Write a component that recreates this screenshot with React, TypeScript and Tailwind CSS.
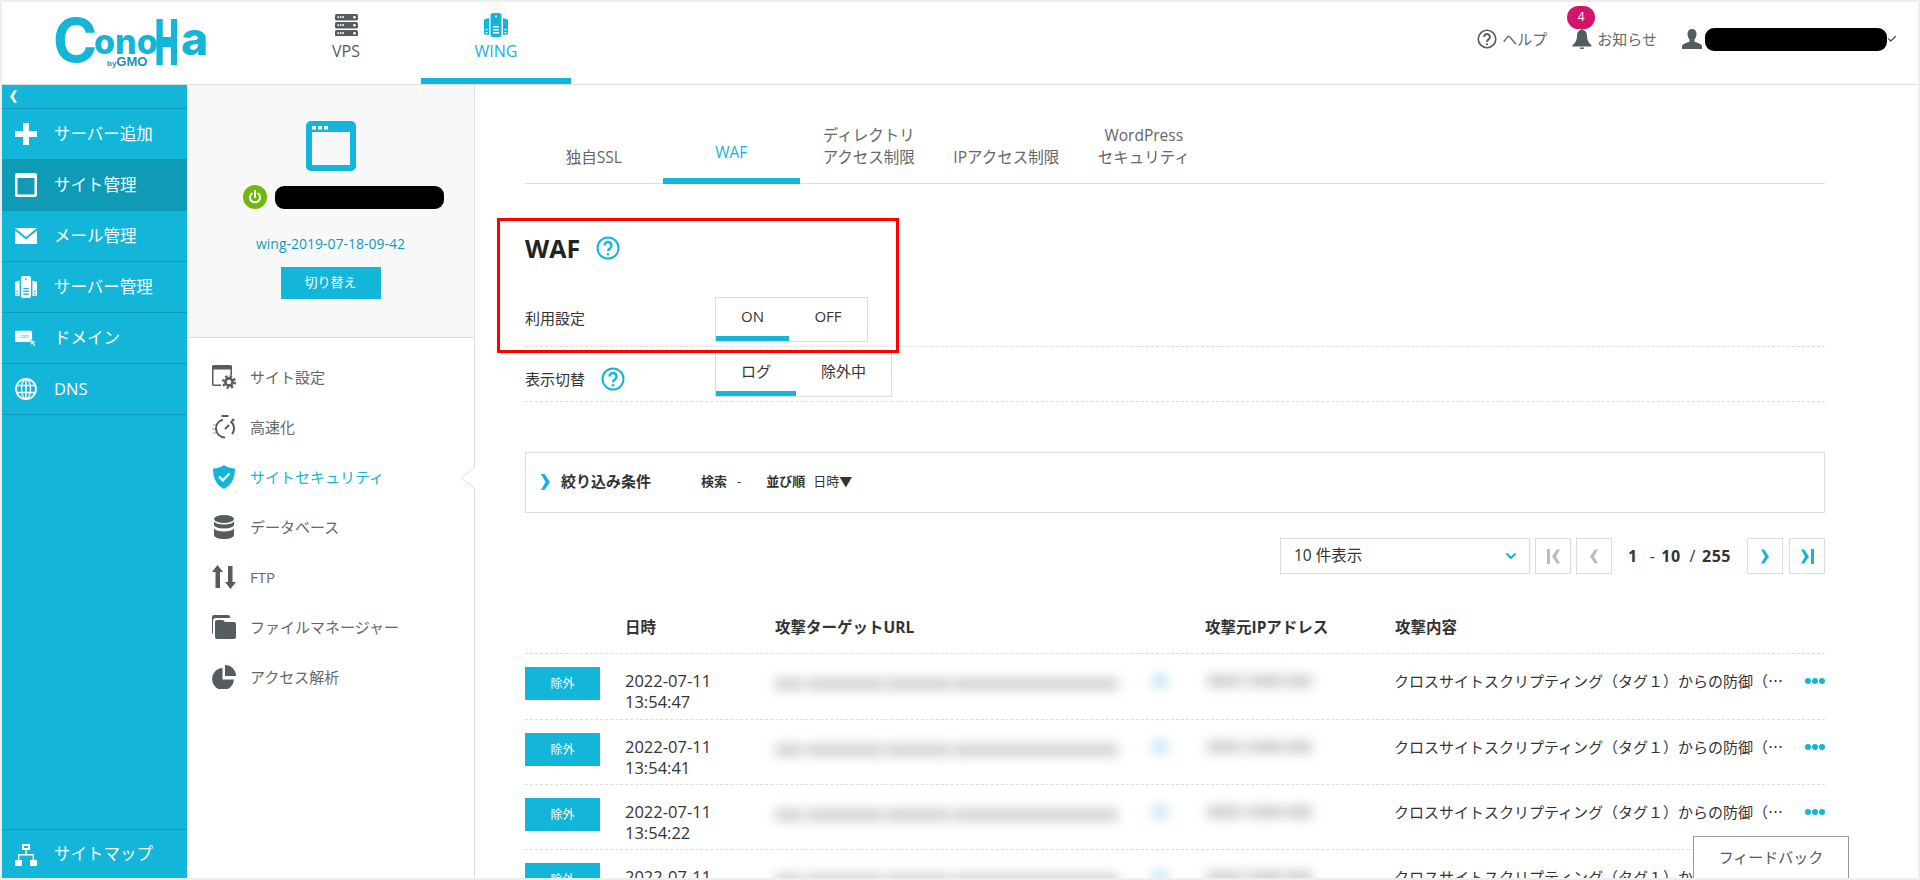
import { ChevronDown, Check } from "lucide-react"
import type { ReactNode } from "react"

const font = "font-['Open_Sans','Noto_Sans_CJK_JP',sans-serif]"

/* ---------- icons ---------- */

function WindowIcon({ className }: { className?: string }) {
  return (
    <svg viewBox="0 0 50 50" className={className} fill="currentColor">
      <path fillRule="evenodd" d="M5 0h40a5 5 0 0 1 5 5v40a5 5 0 0 1-5 5H5a5 5 0 0 1-5-5V5a5 5 0 0 1 5-5zM6 11v33h38V11z" />
      <rect x="6" y="5" width="4" height="3.5" fill="#fff" />
      <rect x="12" y="5" width="4" height="3.5" fill="#fff" />
      <rect x="18" y="5" width="4" height="3.5" fill="#fff" />
    </svg>
  )
}

function ServerIcon({ className }: { className?: string }) {
  return (
    <svg viewBox="0 0 23 22" className={className} fill="currentColor">
      {[0, 8, 16].map((y) => (
        <g key={y}>
          <rect x="0" y={y} width="23" height="6.5" rx="1.5" />
          <rect x="2.5" y={y + 2.2} width="1.5" height="1.8" fill="#fff" />
          <rect x="5" y={y + 2.2} width="1.5" height="1.8" fill="#fff" />
          <rect x="7.5" y={y + 2.2} width="1.5" height="1.8" fill="#fff" />
          <circle cx="19.5" cy={y + 3.2} r="1.3" fill="#fff" />
        </g>
      ))}
    </svg>
  )
}

// same drawing in the header (white details) and the sidebar (teal details)
function WingIcon({ className, detail }: { className?: string; detail: string }) {
  return (
    <svg viewBox="0 0 24 24" className={className} fill="currentColor">
      <path d="M0 6.5 5 5v17l-4-.5A1 1 0 0 1 0 20.5z" />
      <path d="M24 6.5 19 5v17l4-.5a1 1 0 0 0 1-1z" />
      <rect x="6.5" y="0" width="11" height="24" rx="2.5" />
      <rect x="9" y="13" width="6" height="1.5" fill={detail} />
      <rect x="9" y="16" width="6" height="1.5" fill={detail} />
      <rect x="9" y="19" width="6" height="1.5" fill={detail} />
      <circle cx="12" cy="3.5" r="1" fill={detail} />
      <rect x="1.5" y="16" width="2" height="1.2" fill={detail} />
      <rect x="1.5" y="19" width="2" height="1.2" fill={detail} />
      <rect x="20.5" y="16" width="2" height="1.2" fill={detail} />
      <rect x="20.5" y="19" width="2" height="1.2" fill={detail} />
    </svg>
  )
}

function PlusIcon({ className }: { className?: string }) {
  return (
    <svg viewBox="0 0 22 22" className={className} fill="currentColor">
      <path d="M8 0h6v8h8v6h-8v8H8v-8H0V8h8z" />
    </svg>
  )
}

function SmallWindowIcon({ className }: { className?: string }) {
  return (
    <svg viewBox="0 0 22 24" className={className} fill="currentColor">
      <path fillRule="evenodd" d="M2 0h18a2 2 0 0 1 2 2v20a2 2 0 0 1-2 2H2a2 2 0 0 1-2-2V2a2 2 0 0 1 2-2zM2.500 5v16.500h17V5z" />
    </svg>
  )
}

function MailIcon({ className }: { className?: string }) {
  return (
    <svg viewBox="0 0 22 16" className={className} fill="currentColor">
      <path d="M0 0h22L11 9z" />
      <path d="M0 2.500l11 9 11-9V16H0z" />
    </svg>
  )
}

function GlobeIcon({ className }: { className?: string }) {
  return (
    <svg viewBox="0 0 22 22" className={className} fill="none" stroke="currentColor" strokeWidth="1.400">
      <circle cx="11" cy="11" r="10" strokeWidth="1.800" />
      <ellipse cx="11" cy="11" rx="4.500" ry="10" />
      <path d="M11 1v20M1.500 7.500h19M1.500 14.500h19" />
    </svg>
  )
}

function DomainIcon({ className }: { className?: string }) {
  return (
    <svg viewBox="0 0 27 20" className={className}>
      <rect x="0" y="1" width="21" height="14" rx="1" fill="#fff" />
      <path d="M19 12l7 3-3 1 2 3-1.500 1-2-3-2 2z" fill="#fff" stroke="#13b5d8" strokeWidth="0.6" />
      <text x="10.500" y="10.500" fontSize="6" textAnchor="middle" fill="#13b5d8" fontFamily="Open Sans">.com</text>
    </svg>
  )
}

function SitemapIcon({ className }: { className?: string }) {
  return (
    <svg viewBox="0 0 22 22" className={className} fill="#fff">
      <path fillRule="evenodd" d="M7 0h8v6H7zM9 2v2h4V2z" />
      <path d="M10.300 6h1.400v4H19v6h-1.400v-4.600H4.400V16H3v-6h7.300z" />
      <rect x="0" y="16" width="7" height="6" />
      <rect x="15" y="16" width="7" height="6" />
    </svg>
  )
}

function HelpIcon({ className, width = 2 }: { className?: string; width?: number }) {
  return (
    <svg viewBox="0 0 24 24" className={className} fill="none" stroke="currentColor" strokeWidth={width}>
      <circle cx="12" cy="12" r="10.500" />
      <path d="M8.500 9.500a3.500 3.500 0 1 1 5.600 2.800c-1.300 1-2.100 1.500-2.100 3" strokeWidth="2.400" />
      <circle cx="12" cy="18.300" r="1.300" fill="currentColor" stroke="none" />
    </svg>
  )
}

function BellIcon({ className }: { className?: string }) {
  return (
    <svg viewBox="0 0 20 20" className={className} fill="currentColor">
      <circle cx="10" cy="1.500" r="1.500" />
      <path d="M10 1c3.500 0 5 2.500 5 6 0 4 1.500 6.500 4.500 9.500v1H.5v-1C3.500 13.500 5 11 5 7c0-3.500 1.500-6 5-6z" />
      <path d="M8 18.500h4a2 2 0 0 1-4 0z" />
    </svg>
  )
}

function UserIcon({ className }: { className?: string }) {
  return (
    <svg viewBox="0 0 20 20" className={className} fill="currentColor">
      <path d="M10 0c3 0 4.500 2 4.500 5 0 2.500-1 4.500-2 5.500v2c1 1 7.500 2 7.500 5V20H0v-2.500c0-3 6.500-4 7.500-5v-2C6.500 9.500 5.500 7.500 5.500 5 5.500 2 7 0 10 0z" />
    </svg>
  )
}

function PowerIcon() {
  return (
    <div className="flex h-6 w-6 items-center justify-center rounded-full bg-[#6cb80e]">
      <svg viewBox="0 0 16 16" className="h-4 w-4" fill="none" stroke="#fff" strokeWidth="2" strokeLinecap="round">
        <path d="M8 2v6" />
        <path d="M4.800 4.500a5 5 0 1 0 6.400 0" />
      </svg>
    </div>
  )
}

function SiteSettingIcon() {
  return (
    <svg viewBox="0 0 24 24" className="h-6 w-6" fill="none">
      <path fillRule="evenodd" fill="#555c60" d="M1.500 0h17A1.500 1.500 0 0 1 20 1.500V10h-1.500V4.500h-17v15H9V21H1.500A1.500 1.500 0 0 1 0 19.500v-18A1.500 1.500 0 0 1 1.500 0z" />
      <circle cx="17" cy="17" r="5.800" stroke="#555c60" strokeWidth="2.400" strokeDasharray="2.300 2.250" />
      <circle cx="17" cy="17" r="3.600" stroke="#555c60" strokeWidth="2.600" />
    </svg>
  )
}

function SpeedIcon() {
  return (
    <svg viewBox="0 0 24 24" className="h-6 w-6" fill="none" stroke="#555c60">
      <rect x="9.500" y="0" width="7" height="2" fill="#555c60" stroke="none" />
      <circle cx="13" cy="13.500" r="9" strokeWidth="2" strokeDasharray="26 8" strokeDashoffset="-14" />
      <path d="M13 14l4-4" strokeWidth="2" />
      <circle cx="21" cy="5" r="1.500" fill="#555c60" stroke="none" />
      <path d="M1 10h3M0 14h3M1 18h3" stroke="#bbb" strokeWidth="1.500" />
    </svg>
  )
}

function ShieldIcon() {
  return (
    <svg viewBox="0 0 24 24" className="h-6 w-6">
      <path d="M12 0c3 2 6.500 3.500 11 3.500C23 13 20 20 12 24 4 20 1 13 1 3.500 5.500 3.500 9 2 12 0z" fill="#13b5d8" />
      <path d="M7 11.500l3.800 3.800L17.500 8.500" fill="none" stroke="#fff" strokeWidth="2.400" />
    </svg>
  )
}

function DatabaseIcon() {
  return (
    <svg viewBox="0 0 24 24" className="h-6 w-6" fill="#555c60">
      <ellipse cx="12" cy="4" rx="10" ry="4" />
      <path d="M2 6.500c1.500 2 5 3 10 3s8.500-1 10-3v4c-1.500 2-5 3-10 3s-8.500-1-10-3z" />
      <path d="M2 13.500c1.500 2 5 3 10 3s8.500-1 10-3V20c0 2.500-4.500 4-10 4S2 22.500 2 20z" />
    </svg>
  )
}

function TransferIcon() {
  return (
    <svg viewBox="0 0 24 24" className="h-6 w-6" fill="#555c60">
      <path d="M5.500 0 11 7H8v16H3.500V7H0z" />
      <path d="M18.500 24 24 17h-3.500V1H16v16h-3z" />
    </svg>
  )
}

function FolderIcon() {
  return (
    <svg viewBox="0 0 24 24" className="h-6 w-6" fill="#555c60">
      <path d="M2 0h14a2 2 0 0 1 2 2v1H4a3 3 0 0 0-3 3v13a2 2 0 0 1-1-2V2a2 2 0 0 1 2-2z" />
      <path d="M5 5h6l2 2h9a2 2 0 0 1 2 2v13a2 2 0 0 1-2 2H5a2 2 0 0 1-2-2V7a2 2 0 0 1 2-2z" />
    </svg>
  )
}

function PieIcon() {
  return (
    <svg viewBox="0 0 24 24" className="h-6 w-6" fill="#555c60">
      <path d="M10.500 3v11.500H22A11 11 0 1 1 10.500 3z" />
      <path d="M13 0a11 11 0 0 1 11 11H13z" />
    </svg>
  )
}

function Chevron({ dir = "right", className }: { dir?: "left" | "right"; className?: string }) {
  return (
    <svg viewBox="0 0 9 16" className={className} fill="currentColor">
      {dir === "right" ? <path d="M0 0h3.500L9 8l-5.500 8H0l4.500-8z" /> : <path d="M9 0H5.500L0 8l5.500 8H9L4.500 8z" />}
    </svg>
  )
}

/* ---------- data ---------- */

const sideItems: { label: string; icon: ReactNode; active?: boolean }[] = [
  { label: "サーバー追加", icon: <PlusIcon className="h-[22px] w-[22px]" /> },
  { label: "サイト管理", icon: <SmallWindowIcon className="h-[24px] w-[22px]" />, active: true },
  { label: "メール管理", icon: <MailIcon className="h-[16px] w-[22px]" /> },
  { label: "サーバー管理", icon: <WingIcon className="h-[22px] w-[22px]" detail="#13b5d8" /> },
  { label: "ドメイン", icon: <DomainIcon className="h-[20px] w-[27px] max-w-none" /> },
  { label: "DNS", icon: <GlobeIcon className="h-[22px] w-[22px]" /> },
]

const siteMenu: { label: string; icon: ReactNode; active?: boolean }[] = [
  { label: "サイト設定", icon: <SiteSettingIcon /> },
  { label: "高速化", icon: <SpeedIcon /> },
  { label: "サイトセキュリティ", icon: <ShieldIcon />, active: true },
  { label: "データベース", icon: <DatabaseIcon /> },
  { label: "FTP", icon: <TransferIcon /> },
  { label: "ファイルマネージャー", icon: <FolderIcon /> },
  { label: "アクセス解析", icon: <PieIcon /> },
]

const tabs = [
  { lines: ["独自SSL"] },
  { lines: ["WAF"], active: true },
  { lines: ["ディレクトリ", "アクセス制限"] },
  { lines: ["IPアクセス制限"] },
  { lines: ["WordPress", "セキュリティ"] },
]

const rows = [
  { date: "2022-07-11", time: "13:54:47", h: "h-[66px]" },
  { date: "2022-07-11", time: "13:54:41", h: "h-[65px]" },
  { date: "2022-07-11", time: "13:54:22", h: "h-[65px]" },
  { date: "2022-07-11", time: "13:54:18", h: "h-[65px]" },
]

/* ---------- parts ---------- */

function Logo() {
  return (
    <div className="relative ml-[53px] w-[216px] font-['Inter',sans-serif] font-extrabold text-[#13b5d8]">
      <span className="absolute left-[-2px] top-[8px] text-[60px] font-bold leading-[60px]">C</span>
      <span className="absolute left-[39px] top-[23px] text-[34px] leading-[34px]">ono</span>
      <span className="absolute left-[100px] top-[9px] origin-left scale-x-[0.5] text-[63px] font-black leading-[63px]">H</span>
      <span className="absolute left-[126px] top-[13px] text-[46px] leading-[46px]">a</span>
      <span className="absolute left-[52px] top-[55px] font-['Liberation_Sans',sans-serif] text-[13px] font-bold leading-[10px] text-[#1c8fb8]">
        <span className="text-[8px]">by</span>GMO
      </span>
    </div>
  )
}

function Header() {
  return (
    <header className="flex h-[83px] shrink-0 items-stretch border-b border-[#ddd] bg-white">
      <Logo />
      <nav className="flex">
        <div className="flex w-[150px] flex-col items-center pt-3 text-[#555c60]">
          <ServerIcon className="h-[22px] w-[23px]" />
          <span className={`${font} mt-[3px] text-[16px]`}>VPS</span>
        </div>
        <div className="flex w-[150px] flex-col items-center border-b-[6px] border-[#13b5d8] pt-[11px] text-[#13b5d8]">
          <WingIcon className="h-[24px] w-[24px]" detail="#fff" />
          <span className={`${font} mt-[2px] text-[16px]`}>WING</span>
        </div>
      </nav>
      <div className={`${font} ml-auto flex items-center pb-[8px] pr-[21px] text-[15px] text-[#666]`}>
        <HelpIcon className="h-5 w-5 text-[#555c60]" />
        <span className="ml-[5px]">ヘルプ</span>
        <div className="relative ml-[25px] flex items-center">
          <span className="absolute left-[-5px] top-[-22px] flex h-[23px] w-[28px] items-center justify-center rounded-full bg-[#d3156a] text-[12px] text-white">
            4
          </span>
          <BellIcon className="h-5 w-5 text-[#555c60]" />
          <span className="ml-[5px]">お知らせ</span>
        </div>
        <UserIcon className="ml-[25px] h-5 w-5 text-[#555c60]" />
        <div className="ml-[3px] h-[23px] w-[182px] rounded-[9px] bg-black" />
        <Check className="h-2.5 w-2.5 text-[#444]" strokeWidth={3} />
      </div>
    </header>
  )
}

function Sidebar() {
  return (
    <aside className={`${font} flex w-[185px] shrink-0 flex-col bg-[#13b5d8] text-white`}>
      <div className="flex h-6 items-center border-b border-[#0f9ab8] pl-2">
        <Chevron dir="left" className="h-[13px] w-[7px]" />
      </div>
      {sideItems.map((item) => (
        <div
          key={item.label}
          className={`flex h-[51px] items-center border-b border-[#0f9ab8] pl-[13px] text-[16.5px] ${item.active ? "bg-[#0f9ab5]" : ""}`}
        >
          <span className="flex w-[22px] justify-start">{item.icon}</span>
          <span className="ml-[17px]">{item.label}</span>
        </div>
      ))}
      <div className="mt-auto flex h-[49px] items-center border-t border-[#0f9ab8] pl-[13px] pt-px text-[16.5px]">
        <span className="flex w-[22px] justify-start">
          <SitemapIcon className="h-[22px] w-[22px]" />
        </span>
        <span className="ml-[17px]">サイトマップ</span>
      </div>
    </aside>
  )
}

function SitePanel() {
  return (
    <aside className={`${font} relative flex w-[288px] shrink-0 flex-col border-r border-[#ddd] bg-white`}>
      <div className="flex h-[253px] flex-col items-center border-b border-[#ddd] bg-[#f8f8f8] pt-[36px]">
        <WindowIcon className="h-[50px] w-[50px] text-[#13b5d8]" />
        <div className="ml-[25px] mt-[14px] flex items-center gap-2">
          <PowerIcon />
          <div className="h-[23px] w-[169px] rounded-[9px] bg-black" />
        </div>
        <p className="mt-[25px] text-[14px] leading-5 text-[#129ab8]">wing-2019-07-18-09-42</p>
        <button className="mt-[13px] h-8 w-[100px] bg-[#13b5d8] text-[13px] text-white">切り替え</button>
      </div>
      <ul className="pt-[14px]">
        {siteMenu.map((item) => (
          <li
            key={item.label}
            className={`flex h-[50px] items-center pl-[25px] text-[15px] ${item.active ? "text-[#13b5d8]" : "text-[#666]"}`}
          >
            {item.icon}
            <span className="ml-[14px]">{item.label}</span>
          </li>
        ))}
      </ul>
      {/* notch pointing at the active item */}
      <svg viewBox="0 0 15 22" className="absolute right-[-1px] top-[382px] h-[22px] w-[15px]">
        <path d="M15 0 1 11l14 11" fill="#fff" stroke="#ddd" />
      </svg>
    </aside>
  )
}

function Segment({ items, widths }: { items: string[]; widths: string[] }) {
  return (
    <div className="flex w-fit border border-[#ddd]">
      {items.map((item, i) => (
        <div key={item} className={`${widths[i]} flex h-[43px] items-center justify-center pb-[6px] text-[15px] text-[#333] ${i === 0 ? "border-b-[5px] border-[#13b5d8] pb-px" : ""}`}>
          {item}
        </div>
      ))}
    </div>
  )
}

function PageButton({ children }: { children: ReactNode }) {
  return <div className="flex h-9 w-9 items-center justify-center border border-[#ddd]">{children}</div>
}

// masked values: the reference has these blurred out
function Blurred({ parts, color }: { parts: [number, number][]; color: string }) {
  return (
    <div className="flex h-[12px] w-full items-center blur-[6px]">
      {parts.map(([gap, width], i) => (
        <div key={i} className={`h-[12px] ${color}`} style={{ marginLeft: gap, width }} />
      ))}
    </div>
  )
}

function Main() {
  return (
    <main className={`${font} relative min-w-0 flex-1 overflow-hidden pl-[50px] pr-[93px]`}>
      {/* tabs */}
      <div className="flex h-[99px] items-end border-b border-[#ddd]">
        {tabs.map((tab) => (
          <div
            key={tab.lines[0]}
            className={`flex h-[57px] w-[137.5px] flex-col items-center justify-end pb-[15px] text-[15.5px] leading-[22px] ${tab.active ? "mb-[-1px] h-[58px] border-b-[6px] border-[#13b5d8] pb-[10px] text-[#13b5d8]" : "text-[#666]"}`}
          >
            {tab.lines.map((line) => (
              <span key={line}>{line}</span>
            ))}
          </div>
        ))}
      </div>

      {/* WAF heading */}
      <div className="mt-[49px] flex h-[30px] items-center">
        <h2 className="text-[25px] font-bold leading-none text-[#222]">WAF</h2>
        <HelpIcon className="ml-[16px] h-[24px] w-[24px] text-[#13b5d8]" />
      </div>

      {/* settings */}
      <div className="mt-[34px] flex h-[50px] items-start border-b border-dashed border-[#ddd]">
        <span className="mt-[10px] w-[190px] text-[15px] text-[#333]">利用設定</span>
        <Segment items={["ON", "OFF"]} widths={["w-[73px]", "w-[78px]"]} />
      </div>
      <div className="flex h-[55px] items-end border-b border-dashed border-[#ddd] pb-[4px]">
        <div className="mb-[6px] flex w-[190px] items-center text-[15px] text-[#333]">
          表示切替
          <HelpIcon className="ml-[16px] h-[24px] w-[24px] text-[#13b5d8]" />
        </div>
        <Segment items={["ログ", "除外中"]} widths={["w-[80px]", "w-[95px]"]} />
      </div>

      {/* filter */}
      <div className="mt-[50px] flex h-[61px] items-center border border-[#ddd] pb-[2px] pl-[15px]">
        <Chevron className="h-[16px] w-[9px] text-[#13b5d8]" />
        <span className="ml-[11px] text-[15px] font-bold text-[#333]">絞り込み条件</span>
        <span className="ml-[50px] text-[13px] font-semibold text-[#333]">検索</span>
        <span className="ml-[10px] text-[13px] text-[#333]">-</span>
        <span className="ml-[25px] text-[13px] font-semibold text-[#333]">並び順</span>
        <span className="ml-[8px] text-[13px] text-[#333]">日時▼</span>
      </div>

      {/* pagination */}
      <div className="mt-[25px] flex h-9 items-center justify-end text-[#333]">
        <div className="flex h-9 w-[250px] items-center justify-between border border-[#ddd] pl-[13px] pr-[10px] text-[15.5px]">
          10 件表示
          <ChevronDown className="h-4 w-4 text-[#13b5d8]" strokeWidth={3} />
        </div>
        <div className="ml-[5px]">
          <PageButton>
            <div className="flex items-center gap-[2px] text-[#bbb]">
              <div className="h-[15px] w-[3px] bg-[#bbb]" />
              <Chevron dir="left" className="h-[15px] w-[8px]" />
            </div>
          </PageButton>
        </div>
        <div className="ml-[5px]">
          <PageButton>
            <Chevron dir="left" className="h-[15px] w-[8px] text-[#bbb]" />
          </PageButton>
        </div>
        <div className="ml-[16px] flex w-[119px] items-center text-[16px] font-bold tracking-[0.5px]">
          <span>1</span>
          <span className="ml-[12px] font-normal">-</span>
          <span className="ml-[6px]">10</span>
          <span className="ml-[9px] font-normal">/</span>
          <span className="ml-[6px]">255</span>
        </div>
        <PageButton>
          <Chevron className="h-[15px] w-[8px] text-[#13b5d8]" />
        </PageButton>
        <div className="ml-[6px]">
          <PageButton>
            <div className="flex items-center gap-[2px] text-[#13b5d8]">
              <Chevron className="h-[15px] w-[8px]" />
              <div className="h-[15px] w-[3px] bg-[#13b5d8]" />
            </div>
          </PageButton>
        </div>
      </div>

      {/* table */}
      <div className="mt-[37px] flex h-[43px] items-center border-b border-dashed border-[#ddd] pb-[9px] text-[15.5px] font-bold text-[#333]">
        <span className="ml-[100px] w-[150px]">日時</span>
        <span className="w-[430px]">攻撃ターゲットURL</span>
        <span className="w-[190px]">攻撃元IPアドレス</span>
        <span>攻撃内容</span>
      </div>
      {rows.map((row) => (
        <div key={row.time} className={`${row.h} flex shrink-0 items-start border-b border-dashed border-[#ddd]`}>
          <button className="mt-[13px] h-[33px] w-[75px] shrink-0 bg-[#13b5d8] text-[12px] text-white">除外</button>
          <div className="ml-[25px] mt-[16px] w-[146px] shrink-0 text-[16.5px] leading-[21px] text-[#333]">
            <div>{row.date}</div>
            <div>{row.time}</div>
          </div>
          <div className="mt-[24px] w-[352px] shrink-0">
            <Blurred parts={[[4, 28], [4, 76], [3, 64], [3, 165]]} color="bg-[#cfcfcf]" />
          </div>
          <div className="ml-[27px] mt-[21px] w-[20px] shrink-0">
            <Blurred parts={[[3, 14]]} color="bg-[#b8e0f4]" />
          </div>
          <div className="ml-[37px] mt-[21px] w-[108px] shrink-0">
            <Blurred parts={[[0, 32], [3, 6], [3, 32], [3, 26]]} color="bg-[#cccccc]" />
          </div>
          <span lang="ja" className="ml-[79px] mt-[16px] w-[390px] shrink-0 whitespace-nowrap font-['Noto_Sans_CJK_JP',sans-serif] text-[15px] text-[#333]">
            クロスサイトスクリプティング（タグ１）からの防御（…
          </span>
          <div className="ml-[21px] mt-[24px] flex shrink-0 gap-px">
            <span className="h-[6px] w-[6px] rounded-full bg-[#13b5d8]" />
            <span className="h-[6px] w-[6px] rounded-full bg-[#13b5d8]" />
            <span className="h-[6px] w-[6px] rounded-full bg-[#13b5d8]" />
          </div>
        </div>
      ))}

      {/* red annotation drawn over the screenshot */}
      <div className="pointer-events-none absolute left-[22px] top-[133px] h-[135px] w-[402px] border-[3px] border-[#f00]" />

      <div className="absolute left-[1218px] top-[751px] flex h-[60px] w-[156px] justify-center border border-[#999] bg-white pt-[9px] text-[15px] text-[#555]">
        フィードバック
      </div>
    </main>
  )
}

export default function App() {
  return (
    <div className="box-border flex h-[880px] w-[1920px] flex-col overflow-hidden border-2 border-[#eee] bg-white">
      <Header />
      <div className="flex min-h-0 flex-1">
        <Sidebar />
        <SitePanel />
        <Main />
      </div>
    </div>
  )
}
